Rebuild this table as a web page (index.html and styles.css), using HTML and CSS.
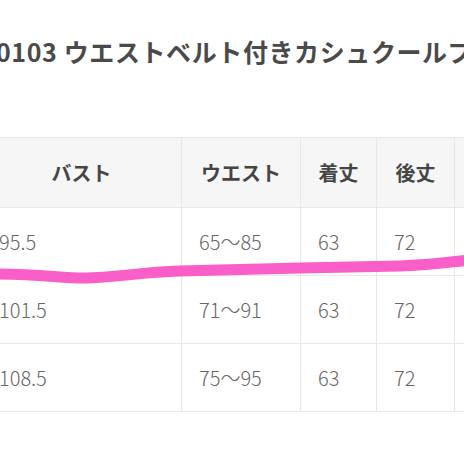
FILE: index.html
```html
<!DOCTYPE html>
<html lang="ja">
<head>
    <meta charset="UTF-8">
    <meta name="viewport" content="width=device-width, initial-scale=1.0">
    <title>サイズ表</title>
    <link rel="stylesheet" href="styles.css">
</head>
<body>
    <h1 class="item-title">0103 ウエストベルト付きカシュクールブラウス</h1>
    <div class="size-wrap">
        <table class="size-table">
            <tr class="head-row">
                <th class="col-bust">バスト</th>
                <th class="col-waist">ウエスト</th>
                <th class="col-len">着丈</th>
                <th class="col-back">後丈</th>
                <th class="col-more">袖丈</th>
            </tr>
            <tr>
                <td>95.5</td>
                <td>65～85</td>
                <td>63</td>
                <td>72</td>
                <td>58</td>
            </tr>
            <tr>
                <td>101.5</td>
                <td>71～91</td>
                <td>63</td>
                <td>72</td>
                <td>58</td>
            </tr>
            <tr>
                <td>108.5</td>
                <td>75～95</td>
                <td>63</td>
                <td>72</td>
                <td>58</td>
            </tr>
        </table>
        <!-- hand drawn highlight over the first row -->
        <svg class="marker" width="464" height="200" viewBox="0 0 464 200">
            <path d="M-5 137 C 40 137, 60 141, 85 141 C 115 141, 140 135, 180 134 L 300 131 L 400 129 C 430 128, 450 125, 470 123" fill="none" stroke="#fa5ec8" stroke-width="11" stroke-linecap="round"/>
        </svg>
    </div>
</body>
</html>
```

FILE: styles.css
```css
body {
    margin: 0;
    background: #fff;
    font-family: "Noto Sans CJK JP", "Noto Sans", sans-serif;
    overflow: hidden;
}
.item-title {
    margin: 34px 0 69px -4px;
    font-size: 25px;
    line-height: 34px;
    font-weight: bold;
    letter-spacing: 0.6px;
    color: #4a4a4a;
    white-space: nowrap;
}
.size-wrap {
    position: relative;
    overflow: hidden;
}
.size-table {
    border-collapse: collapse;
    margin-left: -19px;
    table-layout: fixed;
    width: 600px;
}
.size-table th,
.size-table td {
    border: 1px solid #e8e8e8;
    padding: 0 17px;
    height: 68px;
    box-sizing: border-box;
    white-space: nowrap;
}
.size-table th {
    height: 70px;
    background: #f6f6f6;
    font-size: 20px;
    font-weight: bold;
    color: #454545;
    text-align: center;
}
.size-table td {
    font-size: 20px;
    font-weight: 300;
    color: #666;
    text-align: left;
}
.col-bust { width: 200px; }
.col-waist { width: 119px; }
.col-len { width: 76px; }
.col-back { width: 78px; }
.col-more { width: 127px; }
.marker {
    position: absolute;
    left: 0;
    top: 0;
}
```
